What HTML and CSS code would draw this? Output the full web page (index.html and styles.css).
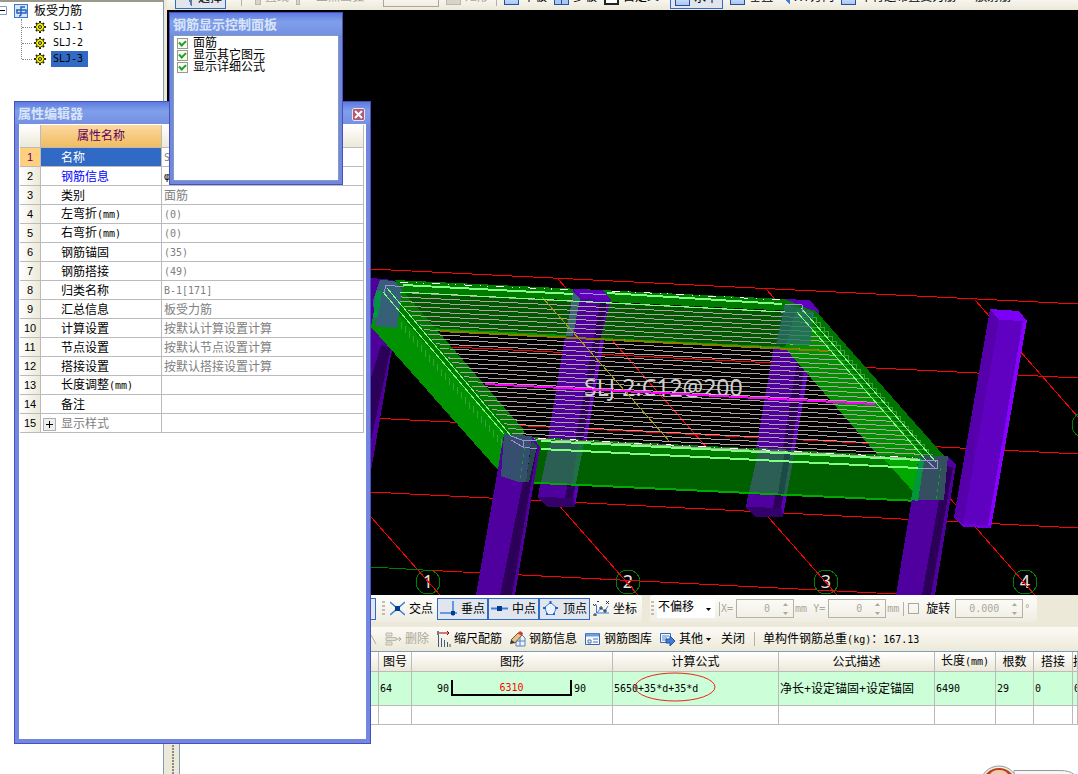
FILE: index.html
```
<!DOCTYPE html>
<html lang="zh-CN">
<head>
  <meta charset="UTF-8">
  <meta name="viewport" content="width=device-width, initial-scale=1.0">
  <title>板受力筋</title>
  <link rel="stylesheet" href="styles.css">
</head>
<body>

  <!-- icons used more than once -->
  <svg class="defs" width="0" height="0">
    <symbol id="gear" viewBox="0 0 12 12">
      <path d="M6 0v12M0 6h12M2 2l8 8M10 2l-8 8" stroke="#222" stroke-width="2"/>
      <circle cx="6" cy="6" r="4" fill="#f4ee00" stroke="#555500"/>
      <path d="M6 2v8M2 6h8" stroke="#ffff00"/>
      <circle cx="6" cy="6" r="1.500" fill="#ffff00" stroke="#222"/>
    </symbol>
    <symbol id="arrows" viewBox="0 0 7 14">
      <path d="M1 4h5L3.500 1zM1 10h5l-2.500 3z" fill="#aca899"/>
    </symbol>
  </svg>

  <div class="app">
    <aside class="tree">
      <div class="root">
        <svg width="7" height="9" viewBox="0 0 7 9"><path d="M0 .5h6.500v8H0" fill="#fff" stroke="#7f9db9"/><path d="M0 4.500h5" stroke="#000"/></svg>
        <svg class="root-icon" width="14" height="14" viewBox="0 0 14 14"><rect x=".5" y=".5" width="13" height="13" fill="#d6e6fb" stroke="#3c78d0"/><path d="M11 3H7v7q0 2-2 2M2 6h10v3H3V6" fill="none" stroke="#2a60b8" stroke-width="1.500"/></svg>
        板受力筋
      </div>
      <ul>
        <li><svg width="12" height="12"><use href="#gear"/></svg><span>SLJ-1</span></li>
        <li><svg width="12" height="12"><use href="#gear"/></svg><span>SLJ-2</span></li>
        <li><svg width="12" height="12"><use href="#gear"/></svg><span class="selected">SLJ-3</span></li>
      </ul>
    </aside>

    <main>
      <div class="top-bar">
        <button class="tool on"><i class="cursor"></i>选择</button>
        <span class="sep wide"></span>
        <button class="tool" disabled><i class="gray small"></i>直线</button>
        <button class="tool more" disabled><i class="gray dot"></i>三点画弧</button>
        <span class="combo"></span>
        <button class="tool" disabled><i class="gray"></i>矩形</button>
        <span class="sep"></span>
        <button class="tool"><i></i>单板</button>
        <button class="tool"><i class="grid"></i>多板</button>
        <button class="tool"><i class="frame"></i>自定义</button>
        <button class="tool on next"><i></i>水平</button>
        <button class="tool"><i></i>垂直</button>
        <button class="tool"><i class="arrow"></i>XY方向</button>
        <button class="tool"><i class="star"></i>平行边布置受力筋</button>
        <button class="tool last">放射筋</button>
      </div>

      <div class="viewport">
        <svg viewBox="167 10 911 585" preserveAspectRatio="xMinYMin slice" shape-rendering="crispEdges">
          <g class="marks">
            <text x="428" y="588">1</text><text x="628" y="588">2</text>
            <text x="826" y="588">3</text><text x="1025" y="588">4</text>
          </g>
          <!-- axis grid -->
          <g stroke="#ff0000" fill="none">
            <path d="M371 269L1078 304M452 347L1078 378M371 418L1078 454M371 492L1078 528M423 570L896 594"/>
            <path d="M371 517L440 595M371 292L638 595M558 279L837 595M766 289L1035 595M975 300L1078 417"/>
          </g>
          <path d="M371 567L423 570" stroke="#008000"/>

          <!-- columns -->
          <g>
            <path d="M371 278L393 280L402 292L371 471z" fill="#4f009c"/>
            <path d="M371 378L381 345L391 348L371 440z" fill="#2c0058"/>
            <path d="M573 289L603 290L611 300L575 507L547 507L538 497z" fill="#50009e"/>
            <path d="M600 302L607 302L574 498L565 498z" fill="#2c0058"/>
            <path d="M607 302L611 300L575 507L572 504z" fill="#5c00b8"/>
            <path d="M573 289L603 290L611 300L580 299z" fill="#5e00bc"/>
            <path d="M539 497L547 507L575 507L574 498z" fill="#34006a"/>
            <path d="M782 299L810 300L819 311L783 517L755 517L746 507z" fill="#50009e"/>
            <path d="M805 312L813 312L782 508L773 508z" fill="#2c0058"/>
            <path d="M815 312L819 311L783 517L780 514z" fill="#5c00b8"/>
            <path d="M782 299L810 300L819 311L790 310z" fill="#5e00bc"/>
            <path d="M747 507L755 517L783 517L782 508z" fill="#34006a"/>
            <path d="M990 309L999 319L963 527L954 517z" fill="#5500ab"/>
            <path d="M999 319L1024 320L990 527L963 524z" fill="#6000c0"/>
            <path d="M1023 320L1027 320L991 528L988 526z" fill="#8800ff"/>
            <path d="M990 309L1019 311L1027 321L999 320z" fill="#7c00f4"/>
            <path d="M954 517L963 524L988 525L991 528L963 527z" fill="#7000dc"/>
          </g>

          <!-- back beam -->
          <path d="M395 280L785 299L815 312L402 292z" fill="#007a00"/>
          <path d="M400 292L805 312L790 350L371 326L378 292z" fill="#006000" fill-opacity=".93"/>
          <path d="M573 289L603 290L611 300L600 340L566 336z" fill="#50009e"/>
          <path d="M573 289L603 290L611 300L580 299z" fill="#5e00bc"/>
          <path d="M573 292L580 299L573 336L566 336z" fill="#376a70"/>
          <path d="M600 302L607 302L601 338L594 338z" fill="#2c0058"/>
          <path d="M371 326L566 336M603 339L790 348" stroke="#009c00" stroke-width="2"/>
          <!-- left and right beams -->
          <path d="M378 292L402 292L524 432L504 470L498 470L371 327z" fill="#009200"/>
          <path d="M385 284L402 290L524 430L512 440L378 292z" fill="#007a00"/>
          <path d="M796 310L815 310L946 458L915 498L785 348z" fill="#009000"/>
          <path d="M798 308L815 310L946 458L928 460z" fill="#007400"/>
          <!-- front beam -->
          <path d="M530 437L945 458L940 468L520 447z" fill="#007a00"/>
          <path d="M530 447L940 468L920 501L515 482z" fill="#006000"/>
          <path d="M883 458L925 460L918 497z" fill="#00a800"/>
          <path d="M518 482L918 501" stroke="#00aa00" stroke-width="2"/>
          <path d="M550 441L584 443L575 484L541 482z" fill="#2c5f54"/>
          <path d="M578 444L584 443L576 484L572 484z" fill="#22704a"/>
          <path d="M759 448L795 450L787 494L749 492z" fill="#2c5f54"/>
          <path d="M785 450L791 450L784 494L778 494z" fill="#1c4a44"/>

          <!-- distribution of bars -->
          <g id="bars" stroke="#b0a2a0" fill="none"></g>
          <g id="hooks" stroke="#38a038" fill="none"></g>
          <text class="bar-label" x="584" y="396">SLJ-2:C12@200</text>
          <path d="M440 331L828 351" stroke="#858000" stroke-width="2"/>
          <path d="M542 297L670 442" stroke="#a09a10"/>
          <path d="M485 384L875 404" stroke="#ff00ff" stroke-width="2"/>

          <!-- column heads of the near frame -->
          <path d="M504 434L532 436L540 447L515 595L476 595z" fill="#50009e"/>
          <path d="M530 447L537 449L512 595L500 595z" fill="#2c0058"/>
          <path d="M504 434L532 436L526 482L518 482L501 476z" fill="#364f70"/>
          <path d="M532 440L537 446L529 482L526 482z" fill="#24484c"/>
          <path d="M919 455L948 456L956 465L935 595L896 595z" fill="#50009e"/>
          <path d="M945 466L953 467L931 595L922 595z" fill="#2c0058"/>
          <path d="M919 455L948 456L944 500L912 500z" fill="#344f60"/>
          <path d="M919 457L924 462L918 501L911 500z" fill="#00983a"/>
          <path d="M380 280L395 281L402 290L397 328L375 326L373 300z" fill="#356078"/>
          <path d="M376 291L382 291L378 318L373 318z" fill="#009444"/>
          <path d="M785 304L814 312L810 345L776 344z" fill="#2a6c68" fill-opacity=".75"/>

          <!-- edge bars -->
          <g stroke="#80ff80" fill="none">
            <path d="M403 285L573 294M607 293L782 304M541 441L920 460M541 449L918 468" stroke-width="2"/>
            <path d="M400 292L785 312"/>
            <path d="M387 288L511 436M383 292L504 434M801 308L936 462M797 312L926 460"/>
          </g>
          <path d="M400 282L573 290M612 291L782 300M538 438L918 458" stroke="#fff" stroke-dasharray="8 8 1 6 1 8" fill="none"/>
          <path d="M384 293L386 285L404 287M511 440L523 447L537 449M511 436L522 440L537 441M523 447V440M580 293L606 295M785 304L802 305V312M920 460L938 460L937 469L918 468M926 460L936 469" stroke="#a090d8" fill="none"/>
          <path d="M525 447L520 482M941 468L936 500" stroke="#00b000" stroke-dasharray="3 4"/>

          <g fill="none" stroke="#008000">
            <circle cx="428" cy="582" r="12"/><circle cx="628" cy="582" r="12"/>
            <circle cx="826" cy="582" r="12"/><circle cx="1025" cy="582" r="12"/>
            <circle cx="1085" cy="425" r="13"/>
          </g>
        </svg>
      </div>

      <div class="bottom">
        <div class="grip-strip"></div>
        <div class="bottom-main">
          <div class="bar snap">
            <div class="group first">
              <span class="cut"></span><span class="grip"></span>
              <button class="tool"><svg width="15" height="15"><path d="M0 1l15 13M15 1L0 14" stroke="#3f7ddb" stroke-width="1.500" fill="none"/><path d="M5 5h5v5H5z" fill="#003c90"/></svg>交点</button>
              <button class="tool on"><svg width="17" height="15"><path d="M0 12h17M13 0v15" stroke="#3f7ddb" stroke-width="1.500"/><path d="M11 10h4v4h-4z" fill="#003c90"/></svg>垂点</button>
              <button class="tool on"><svg width="17" height="15"><path d="M0 7.500h17" stroke="#3f7ddb" stroke-width="2"/><path d="M6 5h5v5H6z" fill="#003c90"/></svg>中点</button>
              <button class="tool on"><svg width="17" height="15"><path d="M8.500 1.500l6 5-3 7h-6l-3-7z" fill="#eaf3ff" stroke="#3f7ddb"/><path d="M7.500 0h2v3h-2zM1 6h3v2H1zM13 6h3v2h-3zM4 12h2v2H4zM11 12h2v2h-2z" fill="#2a62b8"/></svg>顶点</button>
              <button class="tool last"><svg width="17" height="15"><path d="M3.500 4v8H16M4 12l4-5 4 3 3-5" fill="none" stroke="#3f7ddb"/><path d="M0 3l1.500 2L3 3M4 0l1 1 1-1M13 0l3 3M16 0l-3 3M7 6h2v2H7zM11 9h2v2h-2zM1 13h2v2H1z" fill="none" stroke="#335"/></svg>坐标</button>
            </div>
            <div class="group">
              <span class="grip"></span>
              <select aria-label="偏移方式"><option>不偏移</option></select>
              <span class="sep"></span>
              <label class="off" for="dx">X=</label>
              <span class="spin"><input type="text" id="dx" value="0" disabled><svg width="7" height="14"><use href="#arrows"/></svg></span>
              <span class="off unit">mm</span>
              <label class="off" for="dy">Y=</label>
              <span class="spin"><input type="text" id="dy" value="0" disabled><svg width="7" height="14"><use href="#arrows"/></svg></span>
              <span class="off">mm</span>
              <span class="sep"></span>
              <input type="checkbox" id="rotate" class="box"><label for="rotate" class="rotate">旋转</label>
              <span class="spin angle"><input type="text" aria-label="角度" value="0.000" disabled><svg width="7" height="14"><use href="#arrows"/></svg></span>
              <span class="off degree">°</span>
            </div>
          </div>

          <div class="bar rebar">
            <svg width="6" height="12"><path d="M0 2l5 9" stroke="#aca899"/></svg>
            <button class="tool" disabled><svg width="17" height="14"><path d="M1 1h6v3H1zM1 5.500h10v3H1zM1 10h6v3H1z" fill="#e4e2d8" stroke="#bbb8aa"/><path d="M11 7h5M14 5l2 2-2 2" stroke="#aca899" fill="none"/></svg>删除</button>
            <button class="tool"><svg width="14" height="16"><path d="M2 2h10M10 0l2 2-2 2" stroke="#a00000" fill="none"/><path d="M1.500 4v12M4.500 7v9M7.500 9v7M10.500 11v5M13 13v3" stroke="#3d5a78"/><path d="M1 0v4" stroke="#000"/></svg>缩尺配筋</button>
            <button class="tool"><svg width="16" height="16"><path d="M6 4h6l3 3v8H6z" fill="#eaf3ff" stroke="#5583c0"/><path d="M6 10h9M10 5v10" stroke="#5583c0"/><path d="M1 9l7-7 4 2-7 8z" fill="#e8c090" stroke="#745838"/><path d="M8 2l2-2 3 2-1 3z" fill="#d04020"/><path d="M1 9l4 3-5 1z" fill="#333"/></svg>钢筋信息</button>
            <button class="tool"><svg width="16" height="14"><path d="M.5 1.500h14v11H.5z" fill="#f4f9ff" stroke="#3668b8"/><path d="M1 3h13" stroke="#6f9be0" stroke-width="3"/><path d="M3 11V8h3v3zM8 7h5M8 10h5" fill="none" stroke="#4d73a8"/></svg>钢筋图库</button>
            <button class="tool"><svg width="16" height="14"><path d="M.5 1.500h10v9H.5z" fill="#f4f9ff" stroke="#3668b8"/><path d="M2 4h7M2 6h5M2 8h4" stroke="#5583c0"/><path d="M6 7h4V4l5 5-5 5v-3H6z" fill="#3f7ddb" stroke="#23519c"/></svg>其他<svg class="caret" width="5" height="3"><path d="M0 0h5L2.500 3z"/></svg></button>
            <button class="tool close-tool">关闭</button>
            <span class="sep"></span>
            <span class="total">单构件钢筋总重<span class="n">(kg)</span>：<span class="n">167.13</span></span>
          </div>

          <table class="bars-table">
            <colgroup><col class="w-a"><col class="w-b"><col class="w-c"><col class="w-d"><col class="w-e"><col class="w-f"><col class="w-g"><col class="w-h"><col></colgroup>
            <thead>
              <tr><th></th><th>图号</th><th>图形</th><th>计算公式</th><th>公式描述</th><th>长度<span class="n">(mm)</span></th><th>根数</th><th>搭接</th><th>损</th></tr>
            </thead>
            <tbody>
              <tr class="current">
                <td></td><td class="n">64</td>
                <td><div class="shape n"><span>90</span><b>6310</b><span>90</span></div></td>
                <td class="n formula">5650+35*d+35*d<svg width="82" height="32"><ellipse cx="41" cy="16" rx="40" ry="14" fill="none" stroke="#ee2222"/></svg></td>
                <td>净长+设定锚固+设定锚固</td><td class="n">6490</td><td class="n">29</td><td class="n">0</td><td class="n">0</td>
              </tr>
              <tr><td></td><td></td><td></td><td></td><td></td><td></td><td></td><td></td><td></td></tr>
            </tbody>
          </table>
          <svg class="orb" width="98" height="10" viewBox="0 0 98 10">
            <path d="M34 6.500h46q10 0 14 4H34z" fill="#f6f6f6" stroke="#999"/>
            <circle cx="19" cy="21" r="19" fill="#eee" stroke="#999"/>
            <circle cx="19" cy="21" r="17" fill="#b84518"/>
            <ellipse cx="19" cy="11" rx="9" ry="5" fill="#f4c8b0"/>
          </svg>
        </div>
      </div>
    </main>
  </div>

  <section class="window props">
    <header><h2>属性编辑器</h2><button class="close" aria-label="关闭"><svg width="13" height="13"><path d="M3 3l7 7M10 3l-7 7" stroke="#fff" stroke-width="2"/></svg></button></header>
    <div class="content">
      <table>
        <colgroup><col class="c-no"><col class="c-name"><col></colgroup>
        <thead><tr><th></th><th class="active">属性名称</th><th>属性值</th></tr></thead>
        <tbody>
          <tr class="current"><th>1</th><td>名称</td><td><span class="n">SLJ-3</span></td></tr>
          <tr class="key"><th>2</th><td>钢筋信息</td><td class="dark"><span class="n">φ12@200</span></td></tr>
          <tr><th>3</th><td>类别</td><td>面筋</td></tr>
          <tr><th>4</th><td>左弯折<span class="n">(mm)</span></td><td><span class="n">(0)</span></td></tr>
          <tr><th>5</th><td>右弯折<span class="n">(mm)</span></td><td><span class="n">(0)</span></td></tr>
          <tr><th>6</th><td>钢筋锚固</td><td><span class="n">(35)</span></td></tr>
          <tr><th>7</th><td>钢筋搭接</td><td><span class="n">(49)</span></td></tr>
          <tr><th>8</th><td>归类名称</td><td><span class="n">B-1[171]</span></td></tr>
          <tr><th>9</th><td>汇总信息</td><td>板受力筋</td></tr>
          <tr><th>10</th><td>计算设置</td><td>按默认计算设置计算</td></tr>
          <tr><th>11</th><td>节点设置</td><td>按默认节点设置计算</td></tr>
          <tr><th>12</th><td>搭接设置</td><td>按默认搭接设置计算</td></tr>
          <tr><th>13</th><td>长度调整<span class="n">(mm)</span></td><td></td></tr>
          <tr><th>14</th><td>备注</td><td></td></tr>
          <tr class="group-row"><th>15</th><td><button class="plus" aria-label="展开"><svg width="7" height="7"><path d="M0 3.500h7M3.500 0v7" stroke="#000"/></svg></button>显示样式</td><td></td></tr>
        </tbody>
      </table>
    </div>
  </section>

  <section class="window display">
    <header><h2>钢筋显示控制面板</h2></header>
    <div class="content">
      <label><input type="checkbox" checked>面筋</label>
      <label><input type="checkbox" checked>显示其它图元</label>
      <label><input type="checkbox" checked>显示详细公式</label>
    </div>
  </section>

  <script>
    // bars run from the left beam to the right one, hooks hang on both beams
    var bars = "", hooks = "";
    for (var i = 0; i < 32; i++) {
      var t = i / 31;
      var x1 = 392 + t * 124, y1 = 292 + t * 146;
      var x2 = 800 + t * 124, y2 = 313 + t * 146;
      bars += "M" + x1 + " " + y1 + "L" + x2 + " " + y2;
      hooks += "M" + (x1 - 11) + " " + (y1 + 6) + "v7M" + x2 + " " + y2 + "h12v6";
    }
    document.getElementById("bars").innerHTML = '<path d="' + bars + '"/>';
    document.getElementById("hooks").innerHTML = '<path d="' + hooks + '"/>';
  </script>
</body>
</html>
```
FILE: styles.css
```
* {
  box-sizing: border-box;
}
body {
  margin: 0;
  font-family: "Liberation Sans", "Noto Sans CJK SC", sans-serif;
  font-size: 12px;
  line-height: 16px;
  color: #000;
  background: #ece9d8;
  overflow: hidden;
}
button, input, select {
  font: inherit;
  color: inherit;
}
.defs {
  position: absolute;
}
/* half-width text */
.n {
  font-family: "DejaVu Sans Mono", monospace;
  font-size: 10px;
}
.app {
  display: flex;
  gap: 3px;
  height: 100vh;
}

/* component tree */
.tree {
  width: 164px;
  flex: none;
  background: #fff;
  border-top: 2px solid #9a9a8c;
  border-right: 1px solid #7f9db9;
}
.root {
  display: flex;
  align-items: center;
  height: 17px;
}
.root-icon {
  margin: 0 6px 0 7px;
}
.tree ul {
  list-style: none;
  margin: 0 0 0 21px;
  padding: 0;
  height: 40px;
  border-left: 1px dotted #888;
}
.tree li {
  display: flex;
  align-items: center;
  height: 16px;
}
.tree li::before {
  content: "";
  width: 10px;
  margin-right: 2px;
  border-top: 1px dotted #888;
}
.tree li span {
  margin-left: 5px;
  padding: 0 5px 0 2px;
  font-family: "DejaVu Sans Mono", monospace;
  font-size: 10px;
}
.tree .selected {
  background: #316ac5;
}

main {
  flex: 1;
  min-width: 0;
  display: flex;
  flex-direction: column;
}

/* buttons shared by every bar */
.tool {
  display: flex;
  align-items: center;
  gap: 4px;
  padding: 0;
  border: 0;
  background: none;
  white-space: nowrap;
}
.tool:disabled {
  color: #aca899;
}
.sep {
  width: 1px;
  height: 14px;
  background: #b5b2a3;
}
.top-bar {
  display: flex;
  align-items: flex-end;
  gap: 7px;
  height: 10px;
  padding: 0 0 4px 8px;
  overflow: hidden;
  background: linear-gradient(#f7f5ee, #ece9d8);
}
.top-bar .tool {
  flex: none;
  height: 18px;
}
.top-bar .tool.on {
  height: 22px;
  margin-bottom: -3px;
  padding: 0 4px;
  border: 1px solid #316ac5;
  background: #e1e6ee;
}
.top-bar .tool:first-child {
  padding-right: 3px;
}
.top-bar .wide {
  margin: 0 6px 0 8px;
}
.top-bar .more {
  gap: 16px;
  margin-right: 12px;
}
.top-bar .next {
  margin-left: 4px;
}
.top-bar .last {
  margin-left: 12px;
}
.top-bar i {
  width: 15px;
  height: 16px;
  border: 1px solid #23519c;
  background: linear-gradient(#fff, #a9c6f5);
}
.top-bar i.grid {
  background: linear-gradient(#23519c, #23519c) 50% 0 / 1px 100% no-repeat #a9c6f5;
}
.top-bar i.gray {
  border-color: #bbb8aa;
  background: #d8d5c8;
}
.top-bar i.small {
  width: 6px;
}
.top-bar i.dot {
  width: 4px;
}
.top-bar i.cursor {
  width: 8px;
  margin: 0 2px 0 4px;
  border: 0;
  background: linear-gradient(70deg, transparent 50%, #5a7aa8 50%);
}
.top-bar i.frame {
  border: 2px solid #222;
  background: #fff;
}
.top-bar i.arrow {
  width: 10px;
  border: 0;
  background: linear-gradient(45deg, transparent 40%, #3f7ddb 40%);
}
.combo {
  flex: none;
  width: 56px;
  height: 20px;
  margin-bottom: -1px;
  border: 1px solid #aca899;
}

.viewport {
  flex: 1;
  min-height: 0;
  background: #000;
}
.viewport svg {
  display: block;
  width: 100%;
  height: 100%;
}
.marks {
  fill: #e4e4e4;
  font-family: "Noto Sans", sans-serif;
  font-size: 18px;
  text-anchor: middle;
}
.bar-label {
  fill: #d0d0d0;
  font-family: "Noto Sans", sans-serif;
  font-size: 23px;
}

/* lower pane */
.bottom {
  display: flex;
  height: 179px;
}
.grip-strip {
  width: 13px;
  flex: none;
  border-right: 1px solid #7f9db9;
  background: repeating-linear-gradient(#8a8a80 0 2px, #ece9d8 2px 3px) 5px 0 / 2px 100% no-repeat;
}
.bottom-main {
  position: relative;
  flex: 1;
  min-width: 0;
  overflow: hidden;
  background: #fff;
}
.bar {
  display: flex;
  align-items: center;
  background: #ece9d8;
}
.snap {
  height: 32px;
  padding: 0 0 5px 190px;
  gap: 8px;
}
.group {
  display: flex;
  flex: none;
  align-items: center;
  height: 27px;
  padding-right: 7px;
  background: linear-gradient(#fdfdfb, #efede2);
  border-radius: 3px;
}
.group.first {
  padding-right: 5px;
}
.group .tool {
  height: 22px;
  padding: 0 4px;
}
.group .tool.on {
  width: 51px;
  padding: 0 2px;
  border: 1px solid #316ac5;
  background: #e1e6ee;
}
.group .tool.last {
  gap: 3px;
  padding: 0 0 0 3px;
}
.cut {
  width: 6px;
  height: 22px;
  border: 1px solid #316ac5;
  background: #e1e6ee;
}
.grip {
  width: 3px;
  height: 16px;
  margin: 0 3px 0 1px;
  background: repeating-linear-gradient(#c1beb0 0 2px, transparent 2px 4px);
}
.cut + .grip {
  margin: 0 1px 0 6px;
}
select {
  width: 58px;
  height: 19px;
  padding: 0 0 3px 1px;
  border: 0;
  appearance: none;
  background: url("data:image/svg+xml,%3Csvg xmlns='http://www.w3.org/2000/svg' width='5' height='3'%3E%3Cpath d='M0 0h5L2.500 3z'/%3E%3C/svg%3E") 49px 9px no-repeat #fff;
}
.group .sep {
  margin: 0 1px 0 4px;
}
.off {
  color: #aca899;
  font-family: "DejaVu Sans Mono", monospace;
  font-size: 10px;
}
.unit {
  margin-right: 6px;
}
.spin {
  display: flex;
  align-items: center;
  width: 58px;
  height: 19px;
  margin: 0 1px 0 3px;
  padding-right: 4px;
  border: 1px solid #b5b2a3;
}
.spin input {
  width: 100%;
  min-width: 0;
  padding: 0 12px 0 0;
  border: 0;
  background: none;
  color: #aca899;
  font-family: "DejaVu Sans Mono", monospace;
  font-size: 10px;
  text-align: right;
}
.spin svg {
  flex: none;
}
.angle {
  width: 68px;
}
.degree {
  width: 6px;
}
.box {
  appearance: none;
  width: 11px;
  height: 11px;
  margin: 0 7px 0 3px;
  border: 1px solid #aca899;
}
.rotate {
  margin-right: 2px;
}
.rebar {
  height: 25px;
  padding-left: 191px;
  gap: 8px;
  background: linear-gradient(#fbfaf6, #ece9d8);
  border-bottom: 1px solid #7f9db9;
}
.rebar .tool {
  gap: 3px;
}
.rebar .close-tool {
  margin: 0 1px 0 2px;
}
.total {
  white-space: nowrap;
}

/* tables */
table {
  border-collapse: separate;
  border-spacing: 0;
  table-layout: fixed;
  width: 100%;
}
th, td {
  padding: 0;
  font-weight: normal;
  white-space: nowrap;
  overflow: hidden;
  border-right: 1px solid #bbb;
  border-bottom: 1px solid #bbb;
}
.bars-table th {
  height: 20px;
  background: linear-gradient(#fff, #ece9d8);
}
.bars-table td {
  height: 19px;
  padding-left: 1px;
}
.bars-table .current td {
  height: 34px;
  background: #ccffd8;
}
.w-a { width: 199px; }
.w-b { width: 33px; }
.w-c { width: 201px; }
.w-d { width: 166px; }
.w-e { width: 156px; }
.w-f { width: 61px; }
.w-g { width: 38px; }
.w-h { width: 39px; }
.shape {
  display: flex;
  justify-content: center;
  gap: 2px;
  padding-right: 2px;
}
.shape b {
  width: 121px;
  height: 16px;
  border: solid #000;
  border-width: 0 2px 2px;
  margin-top: -1px;
  color: #f00;
  font-weight: normal;
  text-align: center;
}
.bars-table .formula {
  position: relative;
  overflow: visible;
}
.formula svg {
  position: absolute;
  left: 21px;
  top: -1px;
}
.orb {
  position: absolute;
  right: 0;
  bottom: 0;
}

/* floating windows */
.window {
  position: absolute;
  display: flex;
  flex-direction: column;
  padding: 0 4px 4px;
  border: 1px solid #4a4fc0;
  background: #7288e0;
}
.window header {
  display: flex;
  align-items: center;
  justify-content: space-between;
  height: 22px;
  flex: none;
  margin: 0 -4px;
  padding: 2px 5px 0 3px;
  background: linear-gradient(#5d7be0, #7f9fea 40%, #7590e2);
}
.window h2 {
  margin: 0;
  font-size: 13px;
  line-height: 18px;
  color: #d8e4f8;
}
.window .content {
  flex: 1;
  background: #fff;
}
.props {
  left: 14px;
  top: 101px;
  width: 357px;
  height: 643px;
}
.props .content {
  padding: 1px 2px 0 1px;
}
.close {
  display: flex;
  padding: 0;
  width: 13px;
  height: 13px;
  border: 1px solid #e8e0f0;
  border-radius: 2px;
  background: #b05a78;
}
.close svg {
  margin: -1px;
}
.c-no { width: 21px; }
.c-name { width: 121px; }
.props thead th {
  height: 23px;
  background: linear-gradient(#fff, #ece9d8);
}
.props thead .active {
  color: #600060;
  background: linear-gradient(#fbd9a0, #f0bc60);
}
.props tbody th {
  height: 19px;
  font-size: 11px;
  background: linear-gradient(90deg, #fff, #ece9d8);
}
.props td {
  height: 19px;
  padding: 1px 0 0 2px;
  line-height: 16px;
  color: #808080;
}
.props th + td {
  padding-left: 20px;
  color: #000;
}
.props .current th {
  background: #ffd080;
  color: #600060;
}
.props .current th + td {
  background: #316ac5;
  color: #fff;
}
.props .key th + td {
  color: #0000ff;
}
.props .dark {
  color: #000;
}
.props .group-row th + td {
  padding-left: 2px;
  color: #808080;
}
.plus {
  display: inline-flex;
  align-items: center;
  justify-content: center;
  width: 13px;
  height: 13px;
  margin-right: 5px;
  padding: 0;
  vertical-align: middle;
  border: 1px solid #b0b0b0;
  background: #eee;
}
.display {
  left: 169px;
  top: 12px;
  width: 174px;
  height: 173px;
  padding: 0 3px 3px;
}
.display header {
  margin: 0 -3px;
}
.display .content {
  padding: 1px 3px;
  border: 1px solid #7f9db9;
}
.display label {
  display: flex;
  align-items: center;
  gap: 5px;
  height: 12px;
}
.display input {
  appearance: none;
  width: 11px;
  height: 11px;
  margin: 0;
  border: 1px solid #9a9a88;
  background: #f8f8f4;
}
.display input:checked::after {
  content: "";
  display: block;
  width: 5px;
  height: 3px;
  margin: 1px;
  border: solid #21a121;
  border-width: 0 0 2px 2px;
  transform: rotate(-45deg);
}
```
